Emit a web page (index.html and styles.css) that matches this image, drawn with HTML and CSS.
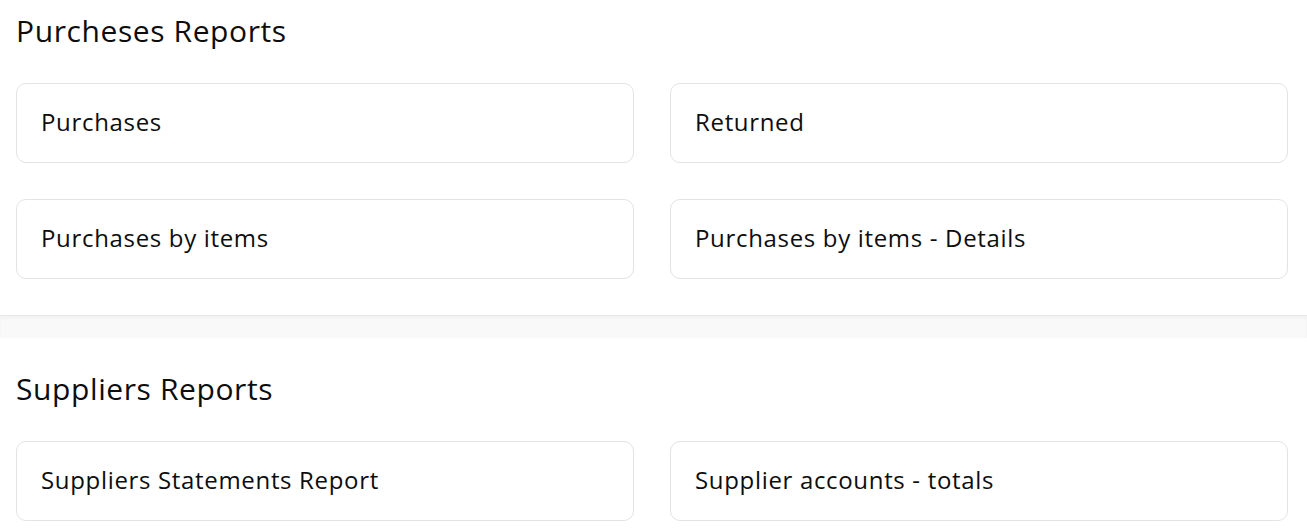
FILE: index.html
```html
<!DOCTYPE html>
<html>
<head>
<meta charset="utf-8">
<link rel="stylesheet" href="styles.css">
</head>
<body>
<section class="section first">
  <h2 class="title">Purcheses Reports</h2>
  <div class="grid">
    <a class="card">Purchases</a>
    <a class="card">Returned</a>
    <a class="card">Purchases by items</a>
    <a class="card">Purchases by items - Details</a>
  </div>
</section>
<div class="band"></div>
<section class="section second">
  <h2 class="title">Suppliers Reports</h2>
  <div class="grid">
    <a class="card">Suppliers Statements Report</a>
    <a class="card">Supplier accounts - totals</a>
  </div>
</section>
</body>
</html>
```
FILE: styles.css
```css
* { box-sizing: border-box; }
html, body { margin: 0; padding: 0; background: #fff; }
body {
  font-family: "Open Sans", "Noto Sans", sans-serif;
  color: #0d0d0d;
  width: 1307px;
  overflow: hidden;
}
.section { padding: 0 19px 0 16px; }
.first { padding-top: 11px; padding-bottom: 36px; }
.second { padding-top: 31px; }
.title {
  margin: 0;
  font-size: 30px;
  font-weight: 500;
  line-height: 40px;
  letter-spacing: 0.6px;
}
.first .title { margin-bottom: 32px; }
.second .title { margin-bottom: 32px; }
.grid {
  display: grid;
  grid-template-columns: 1fr 1fr;
  column-gap: 36px;
  row-gap: 36px;
}
.card {
  display: flex;
  align-items: center;
  height: 80px;
  padding: 0 24px 3px;
  border: 1px solid #e3e3e3;
  border-radius: 10px;
  font-size: 24px;
  font-weight: 500;
  letter-spacing: 0.67px;
  color: #0d0d0d;
}
.band {
  height: 23px;
  background: #f9f9f9;
  border-top: 1px solid #e9e9e9;
  box-shadow: inset 0 2px 3px rgba(0,0,0,0.035);
}
```
